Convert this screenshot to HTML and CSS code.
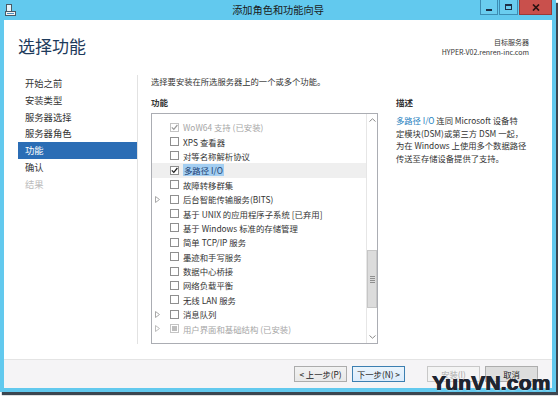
FILE: index.html
```html
<!DOCTYPE html>
<html lang="zh-CN">
<head>
<meta charset="utf-8">
<title>添加角色和功能向导</title>
<link rel="stylesheet" href="styles.css">
</head>
<body>
<div class="window">
  <div class="titlebar">
    <div class="app-icon">
      <svg width="12" height="12" viewBox="0 0 12 12"><rect x="1.5" y="0.5" width="5" height="7" fill="#E8F4FA" stroke="#4A5A66"/><rect x="0.5" y="7.5" width="10" height="4" fill="#F4F4F4" stroke="#4A5A66"/><line x1="2" y1="9.5" x2="9" y2="9.5" stroke="#4A8FC0"/></svg>
    </div>
    <div class="title">添加角色和功能向导</div>
    <div class="controls">
      <div class="ctl min"><span class="glyph-min"></span></div>
      <div class="ctl max"><span class="glyph-max"></span></div>
      <div class="ctl close"><svg width="8" height="7" viewBox="0 0 8 7"><path d="M1 0.5 L7 6.5 M7 0.5 L1 6.5" stroke="#2B1212" stroke-width="1.7"/></svg></div>
    </div>
  </div>
  <div class="client">
    <div class="header">
      <h1 class="page-title">选择功能</h1>
      <div class="target">
        <div>目标服务器</div>
        <div>HYPER-V02.renren-inc.com</div>
      </div>
    </div>
    <div class="body">
      <nav class="steps">
        <div class="step">开始之前</div>
        <div class="step">安装类型</div>
        <div class="step">服务器选择</div>
        <div class="step">服务器角色</div>
        <div class="step active">功能</div>
        <div class="step">确认</div>
        <div class="step disabled">结果</div>
      </nav>
      <div class="main">
        <p class="intro">选择要安装在所选服务器上的一个或多个功能。</p>
        <div class="label">功能</div>
        <div class="listbox">
          <div class="rows">
            <div class="row grayed"><span class="exp"></span><span class="cb"><svg width="7" height="7" viewBox="0 0 7 7"><path d="M0.8 3.4 L2.8 5.4 L6.4 1" fill="none" stroke="#9A9A9A" stroke-width="1.2"/></svg></span><span class="txt">WoW64 支持 (已安装)</span></div>
            <div class="row"><span class="exp"></span><span class="cb"></span><span class="txt">XPS 查看器</span></div>
            <div class="row"><span class="exp"></span><span class="cb"></span><span class="txt">对等名称解析协议</span></div>
            <div class="row selected"><span class="exp"></span><span class="cb"><svg width="7" height="7" viewBox="0 0 7 7"><path d="M0.8 3.4 L2.8 5.4 L6.4 1" fill="none" stroke="#222" stroke-width="1.3"/></svg></span><span class="txt sel">多路径 I/O</span></div>
            <div class="row"><span class="exp"></span><span class="cb"></span><span class="txt">故障转移群集</span></div>
            <div class="row"><span class="exp"><svg width="5" height="7" viewBox="0 0 5 7"><path d="M0.5 0.5 L4.5 3.5 L0.5 6.5 Z" fill="none" stroke="#A8A8A8"/></svg></span><span class="cb"></span><span class="txt">后台智能传输服务(BITS)</span></div>
            <div class="row"><span class="exp"></span><span class="cb"></span><span class="txt">基于 UNIX 的应用程序子系统 [已弃用]</span></div>
            <div class="row"><span class="exp"></span><span class="cb"></span><span class="txt">基于 Windows 标准的存储管理</span></div>
            <div class="row"><span class="exp"></span><span class="cb"></span><span class="txt">简单 TCP/IP 服务</span></div>
            <div class="row"><span class="exp"></span><span class="cb"></span><span class="txt">墨迹和手写服务</span></div>
            <div class="row"><span class="exp"></span><span class="cb"></span><span class="txt">数据中心桥接</span></div>
            <div class="row"><span class="exp"></span><span class="cb"></span><span class="txt">网络负载平衡</span></div>
            <div class="row"><span class="exp"></span><span class="cb"></span><span class="txt">无线 LAN 服务</span></div>
            <div class="row"><span class="exp"><svg width="5" height="7" viewBox="0 0 5 7"><path d="M0.5 0.5 L4.5 3.5 L0.5 6.5 Z" fill="none" stroke="#A8A8A8"/></svg></span><span class="cb"></span><span class="txt">消息队列</span></div>
            <div class="row grayed"><span class="exp"><svg width="5" height="7" viewBox="0 0 5 7"><path d="M0.5 0.5 L4.5 3.5 L0.5 6.5 Z" fill="none" stroke="#BDBDBD"/></svg></span><span class="cb"><span class="indet"></span></span><span class="txt">用户界面和基础结构 (已安装)</span></div>
          </div>
          <div class="scrollbar">
            <div class="sb-btn"><svg width="7" height="4" viewBox="0 0 7 4"><path d="M0.5 3.5 L3.5 0.8 L6.5 3.5" fill="none" stroke="#8A8A8A"/></svg></div>
            <div class="sb-track"><div class="sb-thumb"><span class="grip"></span></div></div>
            <div class="sb-btn"><svg width="7" height="4" viewBox="0 0 7 4"><path d="M0.5 0.5 L3.5 3.2 L6.5 0.5" fill="none" stroke="#8A8A8A"/></svg></div>
          </div>
        </div>
      </div>
      <div class="desc">
        <div class="label">描述</div>
        <p class="desc-text"><span class="link">多路径 I/O</span> 连同 Microsoft 设备特<br>定模块(DSM)或第三方 DSM 一起，<br>为在 Windows 上使用多个数据路径<br>传送至存储设备提供了支持。</p>
      </div>
    </div>
    <div class="footer">
      <button class="btn">&lt; 上一步(P)</button>
      <button class="btn default">下一步(N) &gt;</button>
      <button class="btn disabled install">安装(I)</button>
      <button class="btn cancel">取消</button>
    </div>
  </div>
  <div class="watermark">YunVN.com</div>
</div>
</body>
</html>
```
FILE: styles.css
```css
* { box-sizing: border-box; margin: 0; padding: 0; }
html, body { width: 558px; height: 397px; overflow: hidden; background: #fff; }
body { font-family: "Noto Sans CJK SC", "Noto Sans", sans-serif; color: #333; }

.window {
  position: relative;
  width: 556px;
  height: 392px;
  background: #62C9EE;
  box-shadow: 2px 3px 1px #3B4650;
  display: flex;
  flex-direction: column;
  padding: 0 4px 4px;
}

.titlebar {
  height: 20px;
  display: grid;
  grid-template-columns: 1fr auto 1fr;
  align-items: start;
}
.app-icon { padding: 4px 0 0 1px; line-height: 0; }
.title { font-size: 10.2px; line-height: 20px; color: #1A1A1A; }
.controls { justify-self: end; display: flex; gap: 1px; height: 15px; }
.ctl {
  height: 15px;
  display: flex;
  align-items: center;
  justify-content: center;
  border: 1px solid #3D8DB3;
  border-top: none;
}
.ctl.min { width: 18px; background: #6ACDEF; }
.ctl.max { width: 19px; background: #6ACDEF; }
.ctl.close { width: 33px; background: #C9504C; border-color: #9A3A38; }
.glyph-min { width: 6px; height: 2px; background: #1E2F45; margin-top: 5px; }
.glyph-max { width: 7px; height: 6px; border: 1px solid #1E2F45; border-top-width: 2px; }

.client {
  flex: 1;
  background: #fff;
  display: flex;
  flex-direction: column;
}

.header {
  height: 55px;
  display: flex;
  justify-content: space-between;
  padding: 16px 23px 0 14px;
}
.page-title { font-size: 17px; font-weight: 400; line-height: 20px; color: #1E3B5C; }
.target { text-align: right; font-size: 7px; line-height: 10px; padding-top: 1px; color: #333; }

.body { flex: 1; display: flex; padding: 0 0 15px 14px; }

.steps { width: 120px; border-right: 1px solid #E2E2E2; }
.step { height: 16.8px; line-height: 16.8px; padding-left: 7px; font-size: 9.3px; color: #333; }
.step.active { background: #2B6DB5; color: #fff; }
.step.disabled { color: #BBBBBB; }

.main { width: 227px; margin-left: 13px; }
.intro { font-size: 8.3px; line-height: 12px; color: #333; }
.label { font-size: 8.5px; line-height: 12px; font-weight: 700; color: #333; margin-top: 9px; }
.desc .label { margin-top: 0; }

.listbox {
  margin-top: 5px;
  height: 231px;
  border: 1px solid #ABADB3;
  display: flex;
}
.rows { flex: 1; padding-top: 6px; }
.row {
  height: 14.4px;
  display: flex;
  align-items: center;
  font-size: 8.4px;
  color: #333;
  white-space: nowrap;
}
.row.selected { background: #EFEFEF; }
.row.grayed { color: #A6A6A6; }
.exp { width: 18px; padding-left: 3px; line-height: 0; display: flex; align-items: center; }
.cb {
  width: 9px;
  height: 9px;
  border: 1px solid #8F8F8F;
  background: #fff;
  margin-right: 4px;
  display: flex;
  align-items: center;
  justify-content: center;
  flex: none;
}
.row.grayed .cb { border-color: #C4C4C4; }
.indet { width: 5px; height: 5px; background: #BDBDBD; }
.txt { line-height: 12px; }
.txt.sel { background: #A3CEF1; color: #1B3E72; padding: 0 1px; }

.scrollbar {
  width: 11px;
  border-left: 1px solid #E6E6E6;
  display: flex;
  flex-direction: column;
}
.sb-btn { height: 12px; display: flex; align-items: center; justify-content: center; }
.sb-track { flex: 1; }
.sb-thumb {
  margin-top: 124px;
  height: 58px;
  background: #DCDCDC;
  border: 1px solid #C6C6C6;
  display: flex;
  align-items: center;
  justify-content: center;
}
.grip {
  width: 5px;
  height: 7px;
  background: repeating-linear-gradient(#8E8E8E 0 1px, transparent 1px 2px);
}

.desc { margin-left: 18px; padding-top: 21px; }
.desc-text { margin-top: 6px; font-size: 8.3px; line-height: 12.6px; white-space: nowrap; color: #333; }
.link { color: #1E7FC0; }

.footer {
  height: 29px;
  border-top: 1px solid #E4E4E4;
  background: #F5F4F6;
  display: flex;
  padding: 6px 0 0 290px;
}
.btn {
  width: 53px;
  height: 16px;
  font-family: "Noto Sans CJK SC", "Noto Sans", sans-serif;
  font-size: 8.3px;
  color: #222;
  border: 1px solid #ACACAC;
  background: linear-gradient(#F2F2F2, #E8E8E8);
  margin-right: 5px;
}
.btn.default { border-color: #3C7FB1; background: linear-gradient(#EAF4FC, #DCECFC); }
.btn.install { margin-left: 17px; }
.btn.disabled { color: #A8A8A8; border-color: #C8C8C8; background: #F4F4F4; }
.btn.cancel { background: #DDDDDD; border-color: #ADADAD; }

.watermark {
  position: absolute;
  left: 432px;
  top: 371px;
  font-family: "Liberation Sans", Arial, sans-serif;
  font-weight: 700;
  font-size: 21px;
  line-height: 24px;
  letter-spacing: 0.2px;
  color: #1F2530;
  text-shadow: 0.6px 0 0 #1F2530, -0.4px 0 0 #1F2530, 0 0 2px #fff;
}
```
